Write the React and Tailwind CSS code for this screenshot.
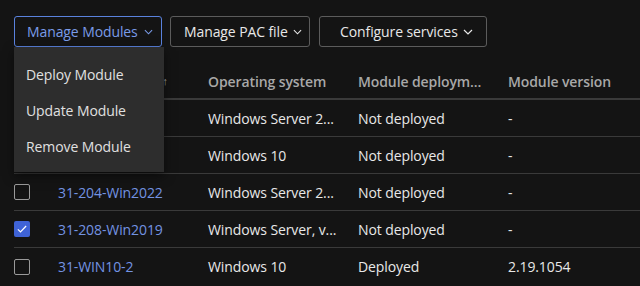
import React from "react";

const font = { fontFamily: '"Open Sans", "Noto Sans", sans-serif', letterSpacing: "-0.1px" };

const Chevron = ({ className }) => (
  <svg viewBox="0 0 10 6" className={className} fill="none" stroke="currentColor" strokeWidth="1.2">
    <path d="M1 1l4 4 4-4" />
  </svg>
);

const Checkbox = ({ checked }) =>
  checked ? (
    <div className="w-4 h-4 rounded-[2px] bg-[#3f63d6] flex items-center justify-center">
      <svg viewBox="0 0 16 16" className="w-3 h-3" fill="none" stroke="white" strokeWidth="1.6">
        <path d="M2.5 8.5l3.5 3.5 7.5-8" />
      </svg>
    </div>
  ) : (
    <div className="w-4 h-4 rounded-[2px] border border-[#9a9a9a]" />
  );

// first two rows sit under the open menu, so their checkbox and name are covered
const rows = [
  { name: "", os: "Windows Server 2...", status: "Not deployed", ver: "-", hidden: true },
  { name: "", os: "Windows 10", status: "Not deployed", ver: "-", hidden: true },
  { name: "31-204-Win2022", os: "Windows Server 2...", status: "Not deployed", ver: "-" },
  { name: "31-208-Win2019", os: "Windows Server, v...", status: "Not deployed", ver: "-", checked: true },
  { name: "31-WIN10-2", os: "Windows 10", status: "Deployed", ver: "2.19.1054" },
];

const cols = "grid grid-cols-[44px_150px_150px_150px_1fr] items-center whitespace-nowrap";

export default function App() {
  return (
    <div className="relative w-[640px] h-[286px] overflow-hidden bg-[#141414] text-[14px] text-[#e8e8e8]" style={font}>
      <div className="flex items-center pt-4 pl-[14px] h-[47px] whitespace-nowrap">
        <button className="flex items-center w-[148px] h-[31px] pl-3 rounded-[3px] border border-[#5a82de] text-[#7a9be8]">
          <span>Manage Modules</span>
          <Chevron className="ml-[6px] w-[9px] h-[6px]" />
        </button>
        <button className="ml-2 flex items-center w-[140px] h-[31px] pl-[13px] rounded-[3px] border border-[#5c5c5c]">
          <span>Manage PAC file</span>
          <Chevron className="ml-[5px] w-[9px] h-[6px]" />
        </button>
        <button className="ml-[9px] flex items-center justify-between w-[168px] h-[31px] pl-5 pr-[13px] rounded-[3px] border border-[#5c5c5c]">
          <span>Configure services</span>
          <Chevron className="w-[10px] h-[6px]" />
        </button>
      </div>

      <div className="mt-[17px] pl-[14px]">
        <div className={`${cols} h-[36px] border-b-2 border-[#3a3a3a] font-semibold text-[#a8a8a8]`}>
          <div />
          <div className="flex items-center pr-10">
            <span className="ml-auto text-[11px]">↑</span>
          </div>
          <div>Operating system</div>
          <div>Module deploym...</div>
          <div>Module version</div>
        </div>
        {rows.map((r, i) => (
          <div key={i} className={`${cols} h-[37px] ${i < rows.length - 1 ? "border-b border-[#3a3a3a]" : ""}`}>
            {r.hidden ? <div /> : <Checkbox checked={r.checked} />}
            <div className="text-[#7393e2]">{r.name}</div>
            <div>{r.os}</div>
            <div>{r.status}</div>
            <div>{r.ver}</div>
          </div>
        ))}
      </div>

      <div className="absolute left-[14px] top-[47px] w-[150px] h-[125px] bg-[#2d2d2d] shadow-[0_4px_10px_rgba(0,0,0,0.5)] pt-[9px]">
        {["Deploy Module", "Update Module", "Remove Module"].map((t) => (
          <div key={t} className="h-9 flex items-center px-3 text-[#e0e0e0]">
            {t}
          </div>
        ))}
      </div>
    </div>
  );
}
